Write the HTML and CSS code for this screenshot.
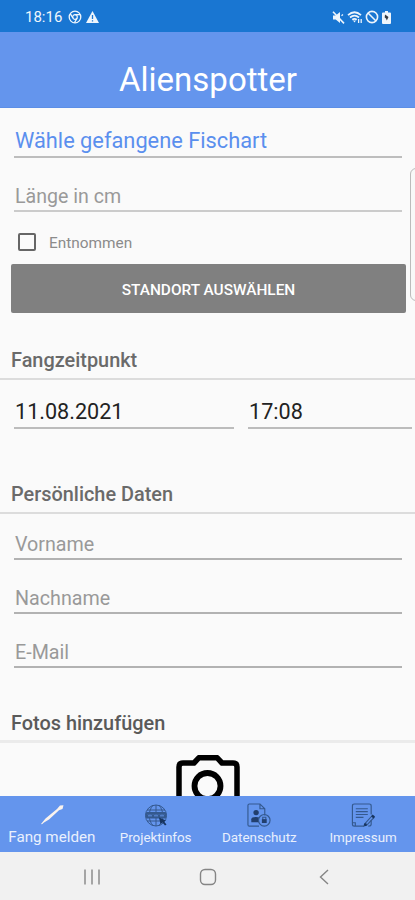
FILE: index.html
```
<!DOCTYPE html>
<html lang="de">
<head>
<meta charset="utf-8">
<meta name="viewport" content="width=device-width">
<title>Alienspotter</title>
<link rel="stylesheet" href="styles.css">
</head>
<body>
<div class="screen">
  <div class="status">
    <div class="status-group">
      <span class="clock">18:16</span>
      <svg class="chrome" width="14" height="14" viewBox="0 0 14 14" fill="none" stroke="currentColor"><circle cx="7" cy="7" r="5.8" stroke-width="1.3"/><circle cx="7" cy="7" r="2.3" stroke-width="1.2"/><path d="M7 4.6h5.2M5 8.2 2.4 3.8M9 8.2 6.5 12.6" stroke-width="1.3"/></svg>
      <svg class="warn" width="13" height="12" viewBox="0 0 13 12"><path d="M6.5 0 13 12H0Z" fill="currentColor"/><path d="M6.5 4v4M6.5 9.2v1.4" stroke="#1976d2" stroke-width="1.3"/></svg>
    </div>
    <div class="status-group status-right">
      <svg width="13" height="13" viewBox="0 0 13 13"><path d="M1 4.5h2.7L8 1v11L3.7 8.5H1Z" fill="currentColor"/><path d="M9.5 4.8 11 3.5" stroke="currentColor" stroke-width="1.2"/><path d="m1 .8 11 11.6" stroke="currentColor" stroke-width="1.6"/></svg>
      <svg width="16" height="13" viewBox="0 0 16 13" fill="none" stroke="currentColor"><path d="M1 4.1Q7.5-1.5 14 4.1M3 6.5q4.5-3.8 9 0M5.3 8.8q2.2-1.7 4.4 0" stroke-width="1.8"/><path d="m6 9.5 1.5 2 1.5-2Z" fill="currentColor" stroke="none"/><path d="M11.6 12V8M14.2 8v4" stroke-width="1.3"/></svg>
      <svg width="14" height="14" viewBox="0 0 14 14" fill="none" stroke="currentColor" stroke-width="1.6"><circle cx="7" cy="7" r="5.6"/><path d="m3 3 8 8"/></svg>
      <svg class="battery" width="9" height="13" viewBox="0 0 9 13"><path d="M3 0h3v1.5h2Q9 1.5 9 2.5V12Q9 13 8 13H1Q0 13 0 12V2.5Q0 1.5 1 1.5h2Z" fill="currentColor"/><path d="M3 3.5 6.5 6 4.8 9.5 4 7.4 2.7 6.6Z" fill="#333b45"/></svg>
    </div>
  </div>
  <header class="header"><h1 class="title">Alienspotter</h1></header>

  <main class="content">
    <div class="field field-species">Wähle gefangene Fischart</div>
    <div class="field field-length">Länge in cm</div>
    <div class="check-row"><span class="box"></span><span class="check-label">Entnommen</span></div>
    <div class="button">STANDORT AUSWÄHLEN</div>

    <h2 class="section section-time">Fangzeitpunkt</h2>
    <div class="datetime">
      <div class="value date">11.08.2021</div>
      <div class="value">17:08</div>
    </div>

    <h2 class="section section-person">Persönliche Daten</h2>
    <div class="field person first">Vorname</div>
    <div class="field person">Nachname</div>
    <div class="field person mail">E-Mail</div>

    <h2 class="section section-photo">Fotos hinzufügen</h2>
    <svg class="camera" width="64" height="54" viewBox="0 0 64 54" fill="none" stroke="#000"><path d="M3 54V12q0-4 4-4h11l5-5.3h18L46 8h11q4 0 4 4v42" stroke-width="5.5" stroke-linejoin="round"/><circle cx="31.5" cy="31" r="13" stroke-width="5.8"/></svg>
    <div class="edge-handle"></div>
  </main>

  <nav class="tabs">
    <div class="tab active">
      <svg width="24" height="24" viewBox="0 0 24 24"><path d="M1 20.5 5.5 15 17 5.5 20 2l3.5-.2-1 3.7-3.5 1.3L9 16l-5 3-2 1.8Z" fill="#faf3ee"/></svg>
      <span>Fang melden</span>
    </div>
    <div class="tab">
      <svg width="24" height="24" viewBox="0 0 24 24" fill="none" stroke="#34598f" stroke-width="1"><circle cx="12" cy="12" r="10.5"/><path d="M12 1.5v21M9 1.8C4 7 4 17 9 22M15 1.8C20 7 20 17 15 22M3 6.5h18M3 17.5h18"/><rect x="2" y="9" width="20" height="5.5" rx="1" fill="#34598f"/><path d="m4 11 1 2 1-2 1 2 1-2m2 0 1 2 1-2 1 2 1-2m2 0 1 2 1-2 1 2 1-2" stroke="#6495ed" stroke-width=".6"/><path d="m15 14 7 3-2 1 2.5 3-1.5 1-2.5-3-2 1.500Z" fill="#17345f" stroke="none"/></svg>
      <span>Projektinfos</span>
    </div>
    <div class="tab">
      <svg width="26" height="26" viewBox="0 0 26 26" fill="none" stroke="#34598f" stroke-width="1.2"><path d="M13 24H3q-1.5 0-1.5-1.5v-20Q1.500 1 3 1h11l5 5v7M14 1v5h5"/><circle cx="10" cy="10" r="2.8" fill="#223f6e" stroke="none"/><path d="M5 20v-3q0-2.500 5-2.500 2 0 3 .7V20Z" fill="#223f6e" stroke="none"/><circle cx="18.5" cy="18" r="6"/><path d="M16.900 17.200v-2.400h3.200v2.400"/><rect x="16" y="16.800" width="5" height="4" fill="#223f6e" stroke="none"/></svg>
      <span>Datenschutz</span>
    </div>
    <div class="tab">
      <svg width="26" height="26" viewBox="0 0 26 26" fill="none" stroke="#34598f" stroke-width="1.2"><path d="M21.500 12V3q0-2-2-2H4Q2 1 2 3v19q0 2 2 2h10M5.500 6H18M5.500 9H18M5.500 12H18M5.500 15h8M2 20.500h3V24M21.500 18v4q0 2-3 2"/><path d="m15 21.500 7.500-8.300 2 1.800-7.500 8-3 1Z"/><path d="m21.500 14 1.500-2 2.500 2-1.500 2Z" fill="#17345f" stroke="none"/><circle cx="15.500" cy="22.500" r="1.500" fill="#17345f" stroke="none"/></svg>
      <span>Impressum</span>
    </div>
  </nav>
  <div class="sysnav">
    <svg width="16" height="16" viewBox="0 0 16 16" stroke="#858585" stroke-width="1.4"><path d="M1 .5v15M8 .5v15M15 .5v15"/></svg>
    <svg class="home" width="18" height="18" viewBox="0 0 18 18" fill="none" stroke="#858585" stroke-width="1.4"><rect x="1.5" y="1.5" width="15" height="15" rx="4.5"/></svg>
    <svg width="10" height="16" viewBox="0 0 10 16" fill="none" stroke="#858585" stroke-width="1.4"><path d="M9 1 1.5 8 9 15"/></svg>
  </div>
</div>
</body>
</html>
```
FILE: styles.css
```
* { box-sizing: border-box; }
body { margin: 0; font-family: Roboto, "Liberation Sans", sans-serif; background: #fafafa; }
h1, h2 { margin: 0; }
svg { display: block; flex: none; }
.screen { width: 415px; height: 900px; display: flex; flex-direction: column; overflow: hidden; background: #fafafa; }
.status { height: 32px; flex: none; display: flex; justify-content: space-between; align-items: center; padding: 2px 24px 0 25px; background: #1976d2; color: #eef5fc; }
.status-group { display: flex; align-items: center; }
.status-right { gap: 2px; }
.clock { font-size: 15px; width: 43px; white-space: nowrap; }
.warn { margin-left: 4px; }
.battery { margin-left: 1px; }
.header { height: 76px; flex: none; background: #6495ed; padding-top: 28px; border-bottom: 1px solid #5c8ee6; }
.title { font-size: 33px; line-height: 40px; font-weight: 400; color: #fff; text-align: center; padding-left: 1px; }
.content { position: relative; flex: 1; min-height: 0; overflow: hidden; display: flex; flex-direction: column; }
.content > * { flex: none; }
.field { margin: 0 13px 0 14px; padding-left: 1px; border-bottom: 2px solid #bdbdbd; font-size: 19.7px; line-height: 24px; color: #999; }
.field-species { height: 50px; padding-top: 21px; font-size: 21.8px; color: #5a8fee; }
.field-length { height: 54px; padding-top: 27px; font-size: 19.6px; border-color: #cbcbcb; }
.check-row { height: 52px; padding: 8px 0 0 18px; display: flex; align-items: center; gap: 13px; }
.box { width: 18px; height: 18px; border: 2px solid #666; border-radius: 2px; }
.check-label { font-size: 15.4px; line-height: 20px; padding-top: 1px; color: #8b8b8b; }
.button { height: 49px; margin: 0 9px 0 11px; border-radius: 2px; background: #808080; color: #fff; font-size: 15.4px; font-weight: 500; line-height: 52px; text-align: center; }
.section { padding-left: 11px; font-size: 19.9px; line-height: 24px; font-weight: 500; color: #6a6a6a; border-bottom: 2px solid #dcdcdc; }
.section-time { height: 67px; padding-top: 36px; }
.datetime { display: grid; grid-template-columns: 220px 164px; gap: 14px; padding-left: 14px; }
.value { height: 49px; padding: 20px 0 0 1px; font-size: 21.6px; line-height: 24px; color: #222; border-bottom: 2px solid #bcbcbc; }
.section-person { height: 85px; padding-top: 54px; }
.person { height: 54px; padding-top: 27px; border-color: #b2b2b2; }
.person.first { height: 46px; padding-top: 19px; }
.section-photo { height: 75px; padding-top: 44px; color: #5a5a5a; border-bottom: 3px solid #ebebeb; }
.camera { margin: 12px 0 0 176px; }
.edge-handle { position: absolute; left: 410px; top: 60px; width: 20px; height: 133px; border: 1px solid #bbb; border-radius: 6px; background: #f8f8f8; }
.tabs { height: 56px; flex: none; display: grid; grid-template-columns: repeat(4, 1fr); background: #6495ed; color: #e9f0fd; }
.tab { display: flex; flex-direction: column; align-items: center; padding-top: 7px; font-size: 13.4px; white-space: nowrap; }
.tab svg { height: 25px; }
.tab span { line-height: 20px; }
.tab.active { font-size: 15.2px; }
.tab.active span { line-height: 18px; }
.sysnav { height: 48px; flex: none; background: #f1f1f1; display: flex; align-items: center; justify-content: space-between; padding: 2px 86px 0 84px; }
.home { margin-right: 4px; }
```
